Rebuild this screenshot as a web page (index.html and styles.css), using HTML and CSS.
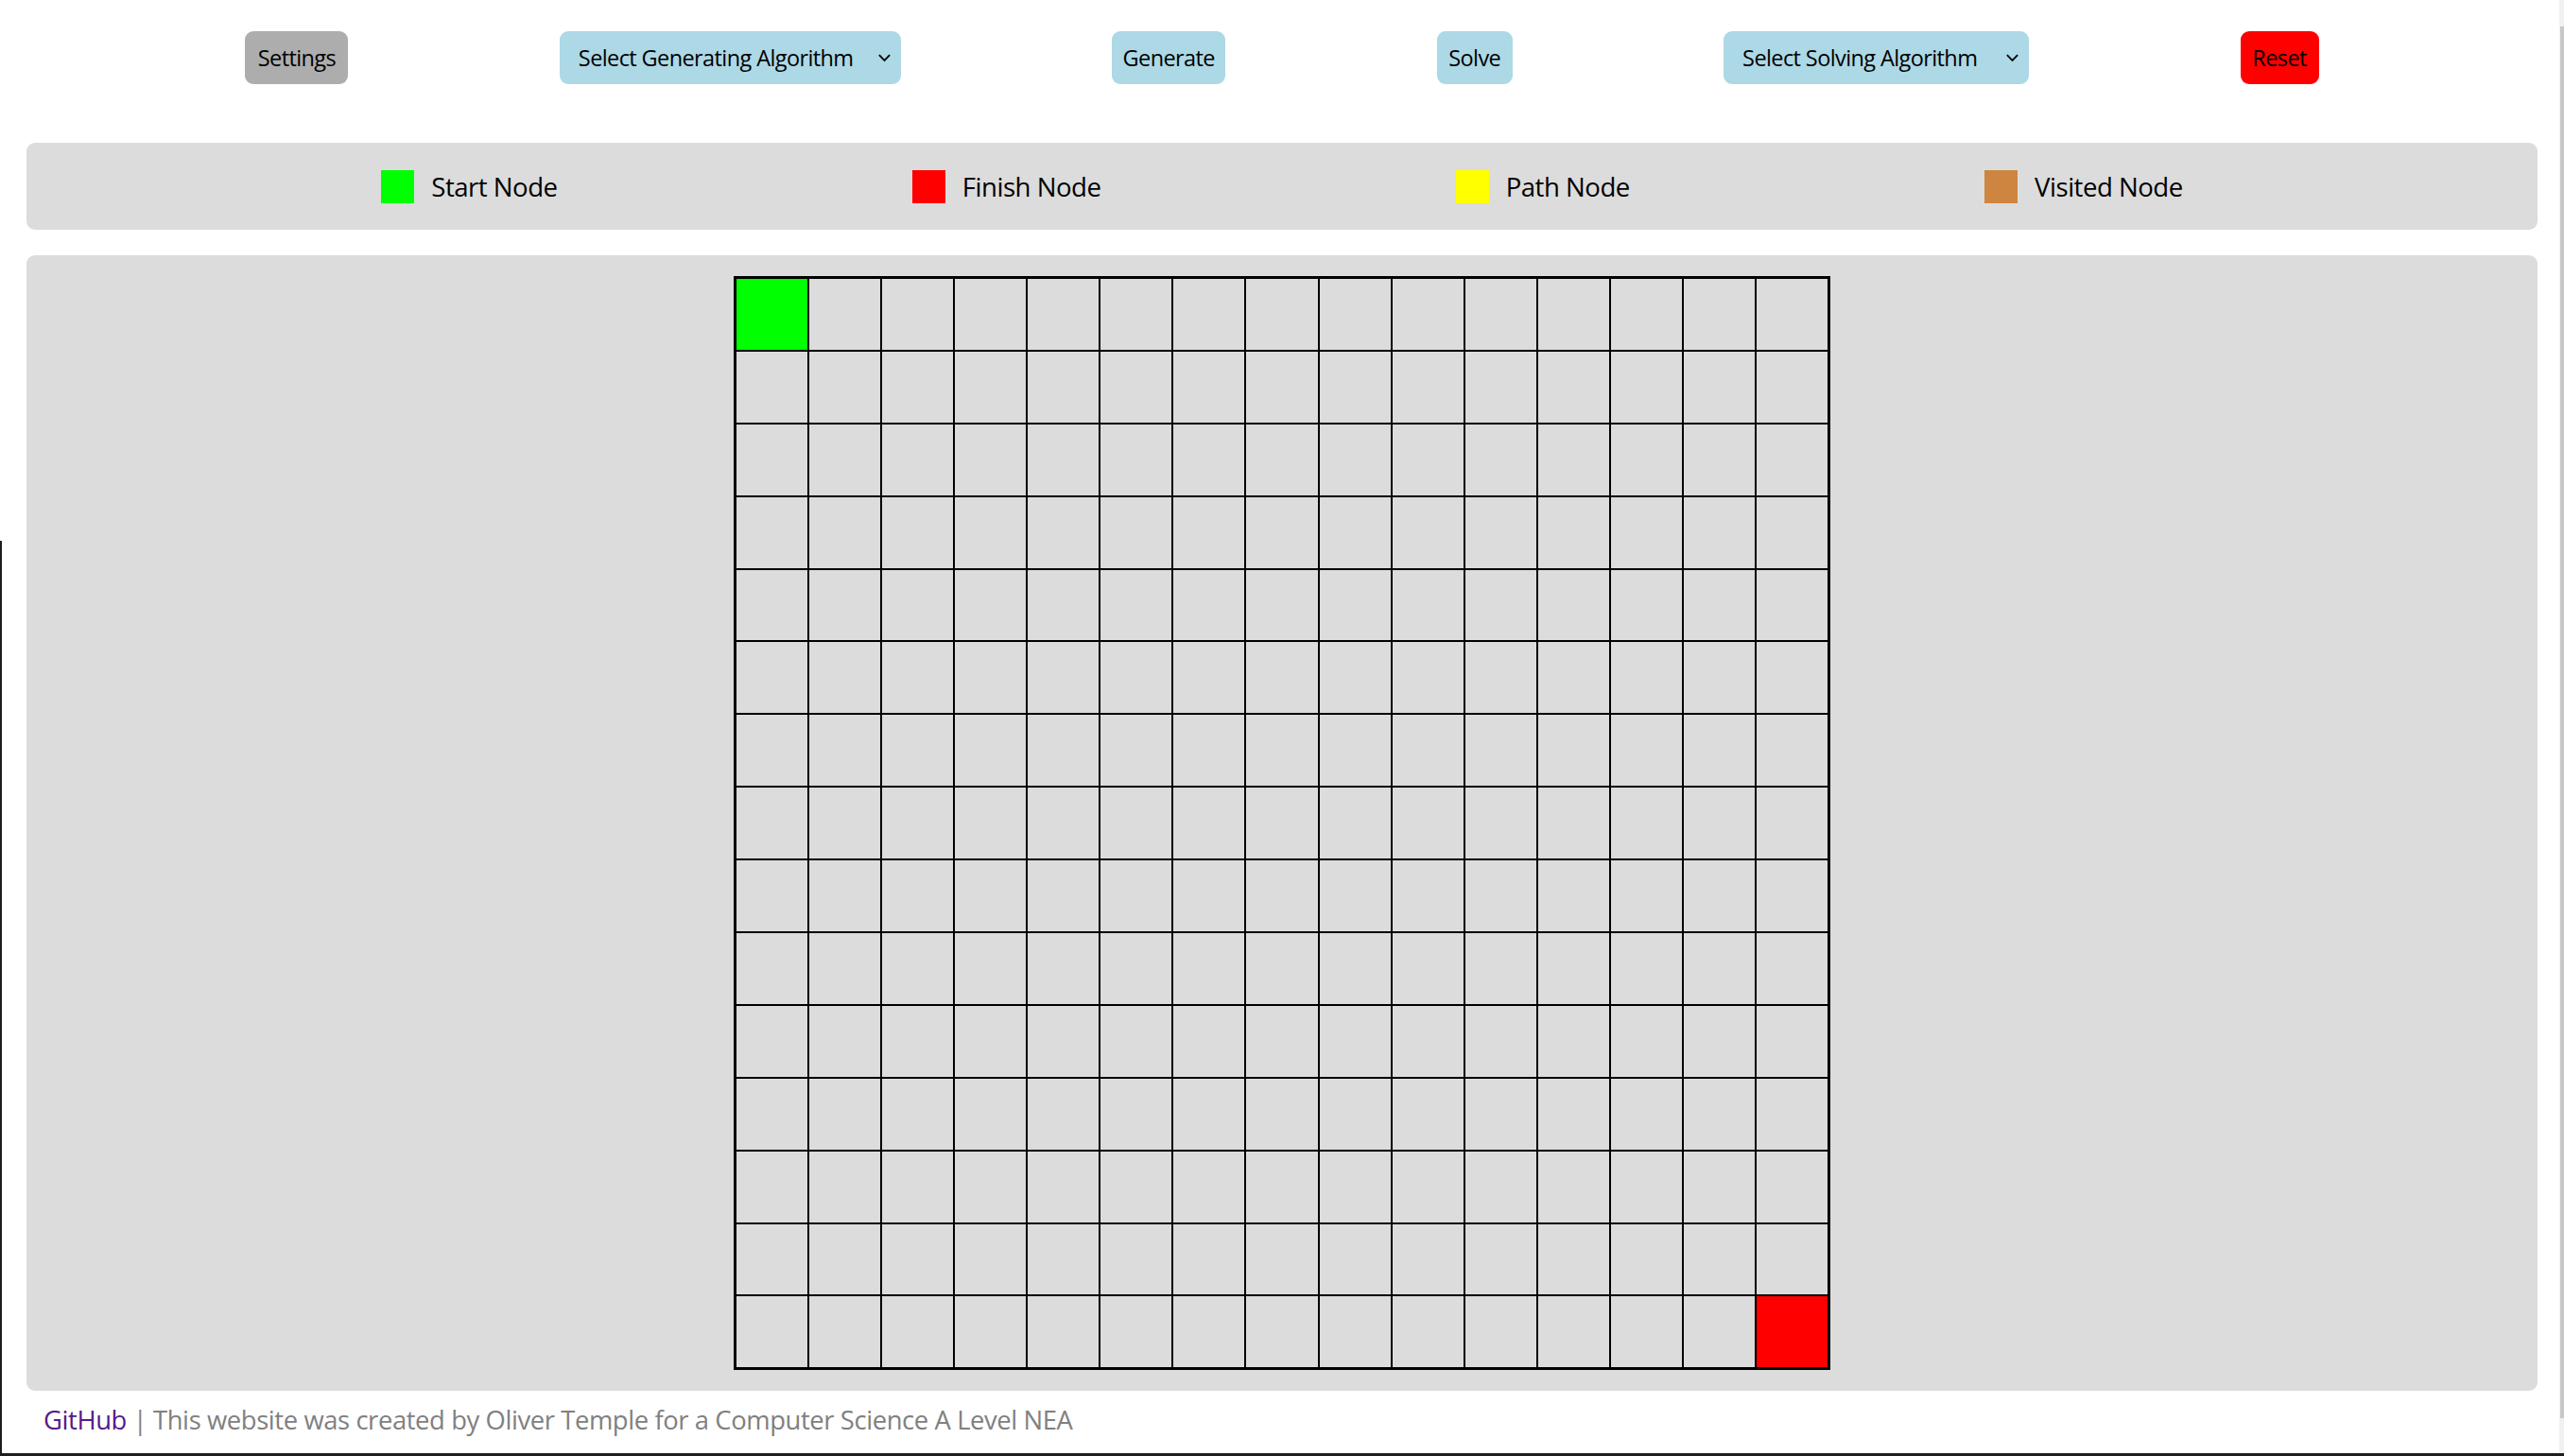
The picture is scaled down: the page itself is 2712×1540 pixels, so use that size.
FILE: index.html
```html
<!DOCTYPE html>
<html lang="en">
<head>
<meta charset="utf-8">
<title>Maze Solver</title>
<link rel="stylesheet" href="styles.css">
</head>
<body>
<div class="toolbar">
  <button class="btn btn-grey">Settings</button>
  <div class="btn btn-blue select"><span>Select Generating Algorithm</span><svg class="chev" viewBox="0 0 16 10" width="15" height="10"><path d="M2 2 L8 8 L14 2" fill="none" stroke="#000" stroke-width="2"/></svg></div>
  <button class="btn btn-blue">Generate</button>
  <button class="btn btn-blue">Solve</button>
  <div class="btn btn-blue select"><span>Select Solving Algorithm</span><svg class="chev" viewBox="0 0 16 10" width="15" height="10"><path d="M2 2 L8 8 L14 2" fill="none" stroke="#000" stroke-width="2"/></svg></div>
  <button class="btn btn-red">Reset</button>
</div>

<div class="legend">
  <div class="key"><span class="swatch start"></span><span>Start Node</span></div>
  <div class="key"><span class="swatch finish"></span><span>Finish Node</span></div>
  <div class="key"><span class="swatch path"></span><span>Path Node</span></div>
  <div class="key"><span class="swatch visited"></span><span>Visited Node</span></div>
</div>

<div class="board">
  <div class="grid" id="grid"></div>
</div>

<div class="footer"><a href="#" class="gh">GitHub</a> | This website was created by Oliver Temple for a Computer Science A Level NEA</div>

<div class="edge-left"></div>
<div class="edge-bottom"></div>
<div class="scroll-track"><div class="scroll-thumb"></div></div>

<script>
  var g = document.getElementById('grid');
  for (var r = 0; r < 15; r++) {
    for (var c = 0; c < 15; c++) {
      var d = document.createElement('div');
      d.className = 'cell';
      if (r === 0 && c === 0) d.className += ' start';
      if (r === 14 && c === 14) d.className += ' finish';
      g.appendChild(d);
    }
  }
</script>
</body>
</html>
```

FILE: styles.css
```css
* { box-sizing: border-box; }

html, body {
  margin: 0;
  padding: 0;
  background: #ffffff;
  height: 100%;
  overflow: hidden;
}

body {
  font-family: "Open Sans", "Noto Sans", sans-serif;
  color: #000;
}

.toolbar {
  display: flex;
  justify-content: space-evenly;
  align-items: center;
  padding: 33px 36px 0;
  height: 89px;
}

.btn {
  height: 56px;
  border: none;
  border-radius: 9px;
  font-family: "Open Sans", "Noto Sans", sans-serif;
  font-size: 23.5px;
  letter-spacing: -0.6px;
  color: #000;
  padding: 0 10px;
  display: flex;
  align-items: center;
  justify-content: center;
  white-space: nowrap;
}

.btn-grey { background: #adadad; width: 109px; }
.btn-blue { background: #add8e6; }
.btn-red { background: #ff0000; width: 83px; }

.toolbar .btn:nth-child(3) { width: 120px; }
.toolbar .btn:nth-child(4) { width: 80px; }

.select {
  justify-content: flex-start;
  padding: 0 10px 0 20px;
}
.select:nth-child(2) { width: 361px; }
.select:nth-child(5) { width: 323px; }
.select span { flex: 1; }
.chev { flex: none; }

.legend {
  margin: 62px 28px 0;
  height: 92px;
  background: #dcdcdc;
  border-radius: 9px;
  display: flex;
  justify-content: space-evenly;
  align-items: center;
  font-size: 27.6px;
  letter-spacing: -0.5px;
}

.key {
  display: flex;
  align-items: center;
  gap: 18px;
}

.swatch {
  width: 35px;
  height: 35px;
  display: block;
}
.swatch.start { background: #00ff00; }
.swatch.finish { background: #ff0000; }
.swatch.path { background: #ffff00; }
.swatch.visited { background: #cd853f; }

.board {
  margin: 27px 28px 0;
  padding: 22px 0;
  background: #dcdcdc;
  border-radius: 9px;
  display: flex;
  justify-content: center;
}

.grid {
  display: grid;
  grid-template-columns: repeat(15, 77.07px);
  grid-auto-rows: 76.9px;
  border: 2px solid #000;
}

.cell {
  border: 1px solid #000;
  background: #dcdcdc;
}
.cell.start { background: #00ff00; }
.cell.finish { background: #ff0000; }

.footer {
  padding: 12px 0 0 46px;
  font-size: 27.4px;
  letter-spacing: -0.4px;
  color: #808080;
}

.gh { color: #551a8b; text-decoration: none; }

.edge-left {
  position: fixed;
  left: 0;
  top: 572px;
  bottom: 0;
  width: 2px;
  background: #1e1e1e;
}
.edge-bottom {
  position: fixed;
  left: 0;
  right: 0;
  bottom: 0;
  height: 3px;
  background: #1e1e1e;
}
.scroll-track {
  position: fixed;
  top: 0;
  right: 0;
  bottom: 3px;
  width: 5px;
  background: #f0f0f0;
}
.scroll-thumb {
  margin-top: 28px;
  margin-left: 1px;
  height: 1472px;
  background: #c8c8c8;
}
```
